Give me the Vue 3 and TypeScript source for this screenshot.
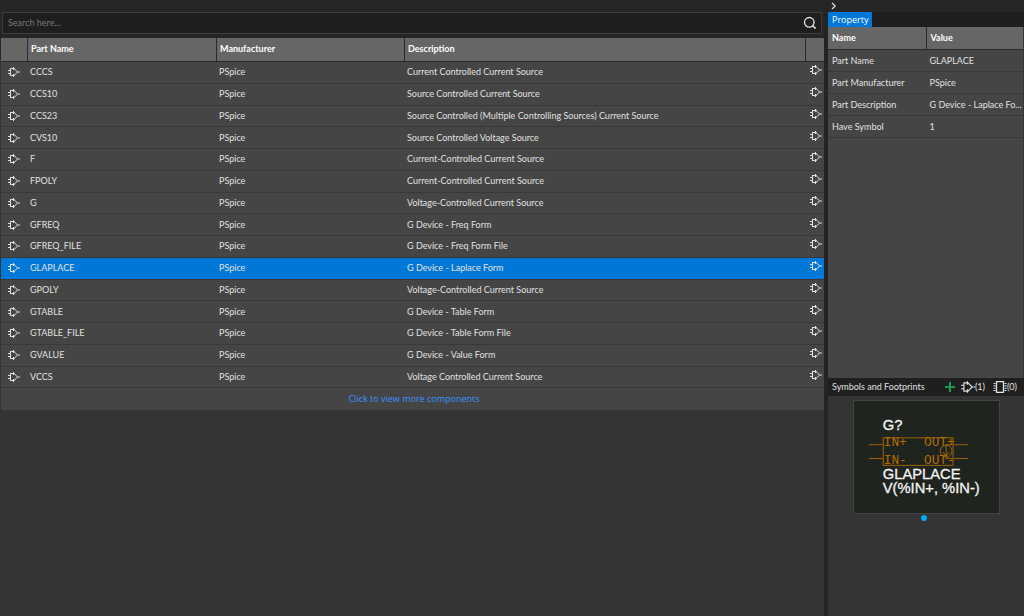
<script setup lang="ts">
import { ref } from 'vue'

interface Part {
  name: string
  maker: string
  description: string
}

const part = (name: string, description: string): Part => ({ name, maker: 'PSpice', description })

const parts: Part[] = [
  part('CCCS', 'Current Controlled Current Source'),
  part('CCS10', 'Source Controlled Current Source'),
  part('CCS23', 'Source Controlled (Multiple Controlling Sources) Current Source'),
  part('CVS10', 'Source Controlled Voltage Source'),
  part('F', 'Current-Controlled Current Source'),
  part('FPOLY', 'Current-Controlled Current Source'),
  part('G', 'Voltage-Controlled Current Source'),
  part('GFREQ', 'G Device - Freq Form'),
  part('GFREQ_FILE', 'G Device - Freq Form File'),
  part('GLAPLACE', 'G Device - Laplace Form'),
  part('GPOLY', 'Voltage-Controlled Current Source'),
  part('GTABLE', 'G Device - Table Form'),
  part('GTABLE_FILE', 'G Device - Table Form File'),
  part('GVALUE', 'G Device - Value Form'),
  part('VCCS', 'Voltage Controlled Current Source'),
]

const properties = [
  { name: 'Part Name', value: 'GLAPLACE' },
  { name: 'Part Manufacturer', value: 'PSpice' },
  { name: 'Part Description', value: 'G Device - Laplace Fo...' },
  { name: 'Have Symbol', value: '1' },
]

const query = ref('')
const selected = ref('GLAPLACE')
</script>

<template>
  <div class="app">
    <svg class="defs" aria-hidden="true">
      <symbol id="gate" viewBox="0 0 12 10">
        <path
          d="M2.5 1.5V8.5M2 1.5H6.5M2 8.5H6.5M6 1.5L9.6 5L6 8.5M0 3.5H2.5M0 6.5H2.5M9.5 5H12M5.5 0V3M5.5 7V10"
          fill="none"
          stroke="currentColor"
        />
      </symbol>
    </svg>

    <main class="browser">
      <form class="search" role="search" @submit.prevent>
        <input v-model="query" type="text" placeholder="Search here..." aria-label="Search parts" />
        <button type="submit" aria-label="Search">
          <svg width="14" height="14" viewBox="0 0 14 14" fill="none" stroke="currentColor">
            <circle cx="6.3" cy="6.3" r="4.8" stroke-width="1.3" />
            <path d="M9.8 9.8L12.6 12.6" stroke-width="1.5" />
          </svg>
        </button>
      </form>

      <table class="grid parts">
        <colgroup>
          <col class="c-icon" />
          <col class="c-name" />
          <col class="c-maker" />
          <col />
          <col class="c-end" />
        </colgroup>
        <thead>
          <tr>
            <th></th>
            <th>Part Name</th>
            <th>Manufacturer</th>
            <th>Description</th>
            <th></th>
          </tr>
        </thead>
        <tbody>
          <tr
            v-for="p in parts"
            :key="p.name"
            :class="{ selected: p.name === selected }"
            @click="selected = p.name"
          >
            <td class="lead"><svg class="gate"><use href="#gate" /></svg></td>
            <td>{{ p.name }}</td>
            <td>{{ p.maker }}</td>
            <td>{{ p.description }}</td>
            <td class="tail"><svg class="gate"><use href="#gate" /></svg></td>
          </tr>
          <tr>
            <td colspan="5" class="more"><a href="#more">Click to view more components</a></td>
          </tr>
        </tbody>
      </table>
    </main>

    <aside class="side">
      <div class="collapse">
        <button type="button" aria-label="Collapse panel">
          <svg width="6" height="8" viewBox="0 0 6 8" fill="none" stroke="currentColor">
            <path d="M1 1L4.2 4L1 7" stroke-width="1.2" />
          </svg>
        </button>
      </div>
      <div class="tabs" role="tablist">
        <button type="button" role="tab" aria-selected="true">Property</button>
      </div>
      <section class="props">
        <table class="grid">
          <thead>
            <tr>
              <th>Name</th>
              <th>Value</th>
            </tr>
          </thead>
          <tbody>
            <tr v-for="p in properties" :key="p.name">
              <td>{{ p.name }}</td>
              <td>{{ p.value }}</td>
            </tr>
          </tbody>
        </table>
      </section>
      <header class="bar">
        <h2>Symbols and Footprints</h2>
        <button type="button" class="add" aria-label="Add symbol">
          <svg width="10" height="10" viewBox="0 0 10 10"><path d="M5 0V10M0 5H10" stroke="currentColor" stroke-width="2" /></svg>
        </button>
        <button type="button">
          <svg class="gate big"><use href="#gate" /></svg>(1)
        </button>
        <button type="button" class="footprint">
          <svg width="14" height="12" viewBox="0 0 14 12" fill="none" stroke="currentColor">
            <rect x="3.5" y="0.6" width="7" height="10.8" stroke-width="1.3" />
            <path d="M0.5 2.5H2.5M0.5 4.8H2.5M0.5 7.2H2.5M0.5 9.5H2.5M11.5 2.5H13.5M11.5 4.8H13.5M11.5 7.2H13.5M11.5 9.5H13.5" />
          </svg>(0)
        </button>
      </header>
      <section class="previews">
        <svg class="preview" viewBox="0 0 147 114" role="img" aria-label="GLAPLACE symbol">
          <g fill="none" stroke="#a0640a">
            <rect x="29.5" y="37.5" width="71" height="28" />
            <path d="M15 44.5H29M15 58.5H29M101 44.5H116M101 58.5H116" />
            <circle cx="93.5" cy="51" r="6" />
            <path d="M93.5 44.5V58.5M90.5 52L93.5 56L96.5 52M93.5 44.5H100M93.5 58.5H100" />
          </g>
          <g class="pin">
            <text x="30" y="46">IN+</text>
            <text x="30" y="64">IN-</text>
            <text x="71" y="46">OUT+</text>
            <text x="71" y="64">OUT-</text>
          </g>
          <g class="label">
            <text x="29" y="30">G?</text>
            <text x="29" y="79">GLAPLACE</text>
            <text x="29" y="94">V(%IN+, %IN-)</text>
          </g>
        </svg>
        <button type="button" class="dot" aria-label="Preview 1"></button>
      </section>
    </aside>
  </div>
</template>

<style>
body {
  background: #343434;
}
</style>

<style scoped>
.app {
  display: grid;
  grid-template-columns: minmax(0, 1fr) 196px;
  column-gap: 4px;
  min-height: 100vh;
  background: #242424;
  color: #e0e0e0;
  font: 9px/14px Lato, 'Open Sans', sans-serif;
}
.defs {
  position: absolute;
  width: 0;
  height: 0;
}
button {
  display: flex;
  align-items: center;
  padding: 0;
  border: 0;
  background: none;
  color: inherit;
  font: inherit;
}
.browser {
  display: flex;
  flex-direction: column;
  padding-left: 1px;
  background: linear-gradient(#262626 60px, #343434 60px);
}
.search {
  display: flex;
  align-items: center;
  height: 22px;
  margin: 12px 2px 4px 1px;
  padding: 0 4px;
  box-sizing: border-box;
  border: 1px solid #3c3c3c;
  background: #1f1f1f;
}
.search input {
  flex: 1;
  padding: 0 1px;
  border: 0;
  outline: 0;
  background: none;
  color: #e0e0e0;
  font: inherit;
}
.search input::placeholder {
  color: #777;
}
.grid {
  width: 100%;
  table-layout: fixed;
  border-collapse: separate;
  border-spacing: 0;
  background: #454545;
}
.grid th,
.grid td {
  height: 21px;
  padding: 0 0 0 3px;
  box-sizing: border-box;
  border-bottom: 1px solid #383838;
  text-align: left;
  white-space: nowrap;
}
.grid th {
  height: 23px;
  background: #666;
  border-bottom: 1px solid #2a2a2a;
  color: #fff;
  font-weight: 700;
}
.grid th + th {
  border-left: 1px solid #2a2a2a;
}
.parts {
  height: 372px;
}
.parts th {
  height: 24px;
  padding-bottom: 2px;
}
.c-icon {
  width: 26px;
}
.c-name {
  width: 189px;
}
.c-maker {
  width: 188px;
}
.c-end {
  width: 19px;
}
.grid .selected {
  background: #0078d7;
}
.gate {
  display: block;
  width: 12px;
  height: 10px;
}
.grid .lead {
  padding-left: 7px;
}
.grid .tail {
  padding: 0 0 4px 5px;
}
.grid .more {
  border: 0;
  text-align: center;
}
.more a {
  color: #3794ff;
  font-family: 'Open Sans', sans-serif;
  text-decoration: none;
}
.side {
  display: flex;
  flex-direction: column;
  background: #343434;
}
.collapse {
  padding: 2px 3px;
  background: #262626;
}
.tabs {
  display: flex;
  background: #1f1f1f;
}
.tabs button {
  height: 15px;
  padding: 0 4px;
  background: #0078d7;
  color: #fff;
  font-family: 'Open Sans', sans-serif;
}
.props {
  height: 351px;
  margin-right: 1px;
  background: #454545;
}
.props .grid th,
.props .grid td {
  padding-left: 4px;
}
.props .grid td {
  height: 22px;
}
.bar {
  display: flex;
  align-items: center;
  height: 18px;
  padding: 0 7px 0 4px;
  background: #1f1f1f;
}
.bar h2 {
  flex: 1;
  margin: 0;
  font: inherit;
}
.bar button + button {
  margin-left: 6px;
}
.bar .footprint {
  margin-left: 8px;
}
.add {
  color: #169b54;
}
.big {
  width: 14px;
  height: 12px;
}
.previews {
  display: flex;
  flex-direction: column;
  align-items: center;
  padding: 4px 0 0;
}
.preview {
  width: 147px;
  height: 114px;
  box-sizing: border-box;
  border: 1px solid #444;
  background: #20241f;
}
.pin {
  fill: #b36b00;
  font: 13px 'Liberation Mono', monospace;
}
.label {
  fill: #f4f4f4;
  stroke: #f4f4f4;
  stroke-width: 0.3px;
  font: 15px 'Liberation Sans', sans-serif;
}
.dot {
  width: 6px;
  height: 6px;
  margin: 1px 5px 0 0;
  border-radius: 50%;
  background: #00adf5;
}
</style>
